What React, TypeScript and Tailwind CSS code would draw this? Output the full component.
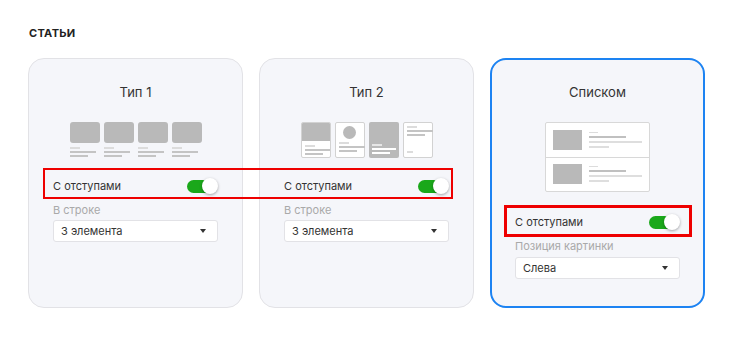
import React from 'react';

function Toggle() {
  return (
    <div className="relative w-[31px] h-[16px] flex items-center">
      <div className="w-[28px] h-[13px] rounded-full bg-[#1aa81a]" />
      <div className="absolute right-0 top-0 w-[16px] h-[16px] rounded-full bg-white shadow-[0_1px_3px_rgba(0,0,0,0.35)]" />
    </div>
  );
}

function Select({ value }: { value: string }) {
  return (
    <div className="h-[22px] w-full bg-white border border-[#e2e2e6] rounded-[3px] flex items-center justify-between pl-[7px] pr-[11px]">
      <span className="text-[11px] text-[#333]">{value}</span>
      <svg width="6" height="4" viewBox="0 0 6 4">
        <path d="M0 0h6L3 4z" fill="#333" />
      </svg>
    </div>
  );
}

function Lines() {
  return (
    <div className="flex flex-col gap-[2px]">
      <div className="w-[10px] h-[2px] bg-[#dcdcdc]" />
      <div className="w-[26px] h-[2px] bg-[#c4c4c4]" />
      <div className="w-[18px] h-[2px] bg-[#c4c4c4]" />
    </div>
  );
}

function Type1Preview() {
  return (
    <div className="flex gap-[4px] h-[36px]">
      {[0, 1, 2, 3].map((i) => (
        <div key={i} className="w-[30px] flex flex-col gap-[4px]">
          <div className="h-[21px] rounded-[3px] bg-[#b9b9b9]" />
          <Lines />
        </div>
      ))}
    </div>
  );
}

function Type2Preview() {
  return (
    <div className="flex gap-[4px] h-[36px]">
      <div className="w-[30px] h-[36px] rounded-[2px] border border-[#d2d2d2] bg-white overflow-hidden flex flex-col">
        <div className="h-[18px] bg-[#b9b9b9]" />
        <div className="pl-[3px] pt-[4px]"><Lines /></div>
      </div>
      <div className="w-[30px] h-[36px] rounded-[2px] border border-[#d2d2d2] bg-white flex flex-col items-center pt-[3px]">
        <div className="w-[13px] h-[13px] rounded-full bg-[#b9b9b9]" />
        <div className="self-start pl-[3px] pt-[3px]"><Lines /></div>
      </div>
      <div className="w-[30px] h-[36px] rounded-[2px] bg-[#b9b9b9] flex flex-col justify-end pl-[3px] pb-[4px] gap-[2px]">
        <div className="w-[10px] h-[2px] bg-[#e6e6e6]" />
        <div className="w-[24px] h-[2px] bg-white" />
        <div className="w-[18px] h-[2px] bg-white" />
      </div>
      <div className="w-[30px] h-[36px] rounded-[2px] border border-[#d2d2d2] bg-white flex flex-col justify-between pl-[3px] pt-[3px] pb-[4px]">
        <Lines />
        <div className="w-[6px] h-[2px] bg-[#dcdcdc]" />
      </div>
    </div>
  );
}

function ListRow() {
  return (
    <div className="flex items-center h-[35px] pl-[7px] gap-[7px]">
      <div className="w-[29px] h-[20px] bg-[#b9b9b9]" />
      <div className="flex flex-col gap-[3px]">
        <div className="w-[9px] h-[1px] bg-[#dcdcdc]" />
        <div className="w-[37px] h-[2px] bg-[#c0c0c0]" />
        <div className="w-[53px] h-[2px] bg-[#dedede]" />
        <div className="w-[20px] h-[2px] bg-[#dedede]" />
      </div>
    </div>
  );
}

function ListPreview() {
  return (
    <div className="w-[105px] h-[70px] bg-white border border-[#d8d8d8] rounded-[2px] flex flex-col">
      <ListRow />
      <div className="h-px bg-[#d8d8d8]" />
      <ListRow />
    </div>
  );
}

function Card({
  title,
  preview,
  label,
  value,
  active,
}: {
  title: string;
  preview: React.ReactNode;
  label: string;
  value: string;
  active?: boolean;
}) {
  return (
    <div
      className={
        active
          ? 'w-[215px] h-[250px] rounded-[16px] border-2 border-[#1d83f2] bg-[#f5f6fa] flex flex-col items-center pt-[24px] px-[23px]'
          : 'w-[215px] h-[250px] rounded-[16px] border border-[#e2e2e6] bg-[#f5f6fa] flex flex-col items-center pt-[25px] px-[24px]'
      }
    >
      <div className="text-[13px] leading-[16px] text-[#333]">{title}</div>
      <div className="mt-[22px]">{preview}</div>
      <div className={(active ? 'mt-[20px]' : 'mt-[18px]') + ' w-full h-[20px] flex items-center justify-between'}>
        <span className="text-[11px] text-[#333]">С отступами</span>
        <Toggle />
      </div>
      <div className="mt-[7px] w-full text-[11px] leading-[14px] text-[#a9a9a9]">{label}</div>
      <div className={(active ? 'mt-[4px]' : 'mt-[3px]') + ' w-full'}>
        <Select value={value} />
      </div>
    </div>
  );
}

export default function App() {
  return (
    <div className="relative w-[733px] h-[339px] bg-white font-['Inter',sans-serif]">
      <div className="pl-[29px] pt-[26px]">
        <div className="text-[11px] leading-[14px] font-bold text-[#222] tracking-[0.3px]">СТАТЬИ</div>
      </div>
      <div className="flex gap-[16px] pl-[28px] mt-[18px]">
        <Card title="Тип 1" preview={<Type1Preview />} label="В строке" value="3 элемента" />
        <Card title="Тип 2" preview={<Type2Preview />} label="В строке" value="3 элемента" />
        <Card title="Списком" preview={<ListPreview />} label="Позиция картинки" value="Слева" active />
      </div>
      <div className="absolute left-[43px] top-[168px] w-[410px] h-[31px] border-[2.5px] border-[#ee0000]" />
      <div className="absolute left-[504px] top-[205px] w-[188px] h-[32px] border-[3px] border-[#ee0000]" />
    </div>
  );
}
